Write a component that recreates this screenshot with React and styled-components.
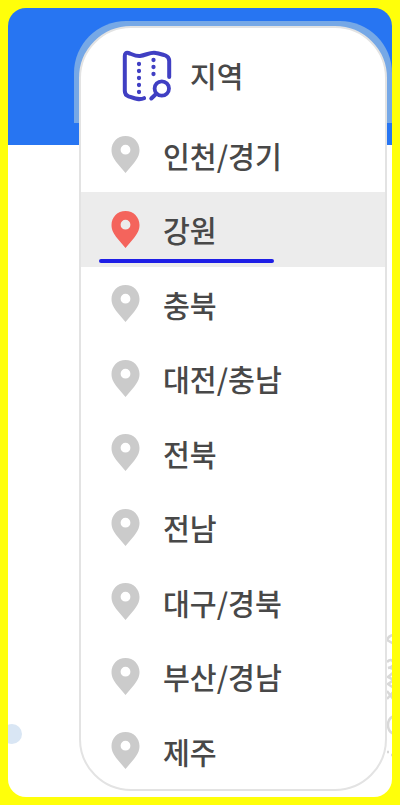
import React from "react";
import styled, { createGlobalStyle } from "styled-components";

const GlobalStyle = createGlobalStyle`
  * {
    box-sizing: border-box;
  }

  body {
    margin: 0;
    background-color: #ffff0a;
    font-family: "Noto Sans CJK KR", "Noto Sans", sans-serif;
  }
`;

const Page = styled.div`
  height: 805px;
  padding: 8px;
  background-color: #ffff0a;
`;

const Screen = styled.main`
  position: relative;
  height: 789px;
  padding: 18px 0 0 71px;
  overflow: hidden;
  border-radius: 18px;
  background: linear-gradient(#2775f2 137px, #fff 137px);
`;

const Halo = styled.div`
  position: absolute;
  top: 13px;
  left: 66px;
  width: 318px;
  height: 102px;
  border-radius: 52px 52px 0 0;
  background-color: #76a8e6;
`;

const Dot = styled.div`
  position: absolute;
  top: 716px;
  left: -6px;
  width: 20px;
  height: 20px;
  border-radius: 50%;
  background-color: #d9e6f4;
`;

const Scribble = styled.svg`
  position: absolute;
  top: 626px;
  left: 376px;
`;

const Panel = styled.nav`
  position: relative;
  width: 308px;
  height: 765px;
  overflow: hidden;
  border: 2px solid #e3e3e3;
  border-radius: 52px;
  background-color: #fff;
`;

const Title = styled.h1`
  display: flex;
  align-items: center;
  gap: 18px;
  height: 89.5px;
  margin: 0;
  padding: 7px 0 0 41px;
  color: #484848;
  font-size: 29px;
  font-weight: 500;
  line-height: 42px;

  span {
    padding-bottom: 2px;
  }
`;

const List = styled.ul`
  margin: 0;
  padding: 0;
  list-style: none;
`;

const Row = styled.li`
  position: relative;
  display: flex;
  align-items: center;
  gap: 23px;
  height: 74.5px;
  padding-left: 30px;
  background-color: ${(props) => (props.$active ? "#ececec" : "transparent")};
  color: #484848;
  font-size: 29.2px;
  font-weight: 500;
  line-height: 40px;
`;

const Underline = styled.span`
  position: absolute;
  left: 18px;
  bottom: 4px;
  width: 175px;
  height: 4px;
  border-radius: 2px;
  background-color: #1e1ee6;
`;

const PinIcon = styled.svg`
  flex: none;
  color: ${(props) => (props.$active ? "#f4645c" : "#cbcbcb")};
`;

const regions = [
  "인천/경기",
  "강원",
  "충북",
  "대전/충남",
  "전북",
  "전남",
  "대구/경북",
  "부산/경남",
  "제주",
];

function Pin({ active }) {
  return (
    <PinIcon $active={active} width="29" height="37" viewBox="0 0 29 37">
      <path
        fill="currentColor"
        fillRule="evenodd"
        d="M14.5 0C6.5 0 .5 6.200 .5 14c0 5.500 2.500 9 5.500 13l8.500 10L23 27c3-4 5.500-7.500 5.500-13C28.500 6.200 22.500 0 14.500 0zm0 8.800a4.900 4.900 0 1 1 0 9.800 4.900 4.900 0 0 1 0-9.800z"
      />
    </PinIcon>
  );
}

function MapIcon() {
  return (
    <svg width="50" height="52" viewBox="0 0 50 52" fill="none" stroke="#403fc3">
      <g strokeWidth="4" strokeLinecap="round">
        <path
          d="M22 48.200C17 50.500 12 48.200 6.500 46.300Q2.800 45 2.800 41V6Q2.800 2 6.500 3C10 4.200 14 6.500 18 6C24 5.300 29 1.500 34 3C38 4 41 4.500 43.500 5.500Q47.200 7 47.200 11V27"
          strokeLinejoin="round"
        />
        <path d="M34 44L29.300 48.500" />
      </g>
      <circle cx="39.800" cy="38.500" r="7.200" strokeWidth="3.800" />
      <g strokeWidth="4.300" strokeLinecap="round">
        <path d="M17 14v29" strokeDasharray="0 7" />
        <path d="M31.500 10v15" strokeDasharray="0 7" />
      </g>
    </svg>
  );
}

function App() {
  return (
    <>
      <GlobalStyle />
      <Page>
        <Screen>
          <Halo />
          <Dot />
          <Scribble width="10" height="140" viewBox="0 0 10 140" fill="none" stroke="#d8d8d8">
            <g strokeWidth="2.500">
              <path d="M10 1Q5 1 3 6l7 4" />
              <path d="M3 28q4-4 6 0t-5 6q5-1 6 4l-6 5 6 3-6 4 6 4" />
              <path d="M3 57l7 9M10 57l-7 8" />
              <path d="M10 82Q4 84 4 91t6 9" />
              <path d="M3 118h2M7 121h2" />
            </g>
          </Scribble>
          <Panel>
            <Title>
              <MapIcon />
              <span>지역</span>
            </Title>
            <List>
              {regions.map((region) => {
                const active = region === "강원";
                return (
                  <Row key={region} $active={active}>
                    <Pin active={active} />
                    {region}
                    {active && <Underline />}
                  </Row>
                );
              })}
            </List>
          </Panel>
        </Screen>
      </Page>
    </>
  );
}

export default App;
